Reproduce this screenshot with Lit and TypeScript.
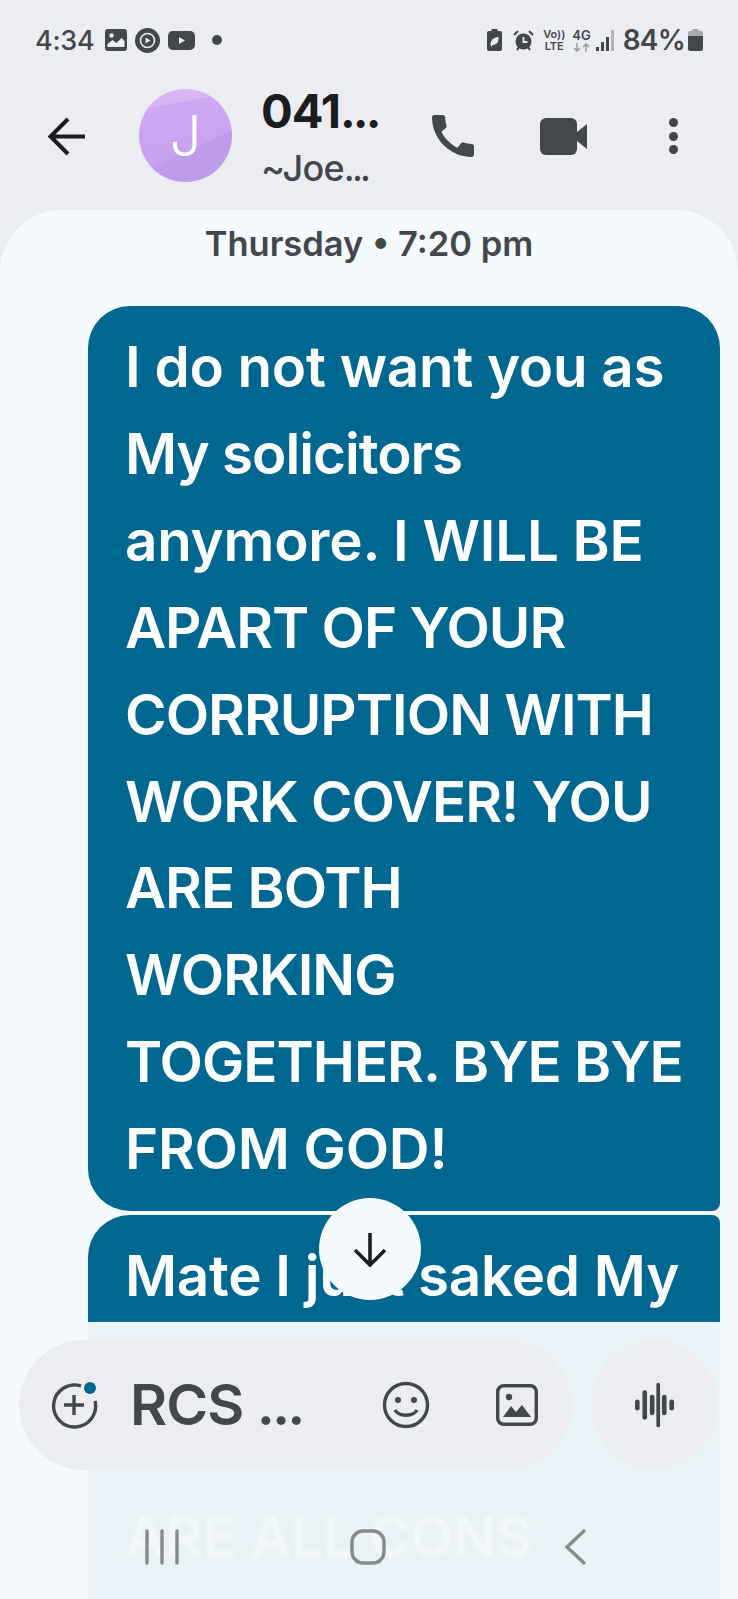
import { LitElement, html, css } from 'lit';
import { customElement } from 'lit/decorators.js';

@customElement('app-root')
export class AppRoot extends LitElement {
  static styles = css`
    :host {
      display: block;
      width: 738px;
      height: 1599px;
      overflow: hidden;
      font-family: Inter, 'Noto Sans', sans-serif;
      background: #ecedf2;
      color: #43474c;
    }
    .page {
      position: relative;
      height: 1599px;
      display: flex;
      flex-direction: column;
    }
    svg { display: block; flex: none; }

    /* status bar */
    .status {
      height: 80px;
      display: flex;
      align-items: center;
      padding: 0 35px;
      flex: none;
    }
    .time { font-size: 27px; font-weight: 500; width: 62px; letter-spacing: -0.3px; }
    .s-left { display: flex; align-items: center; gap: 8px; }
    .s-right { display: flex; align-items: center; margin-left: auto; }
    .pct { font-size: 28px; font-weight: 600; letter-spacing: -0.8px; margin: 0 3px 0 8px; }
    .tiny {
      display: flex;
      flex-direction: column;
      align-items: center;
      font-size: 11.5px;
      line-height: 12px;
      font-weight: 600;
    }
    .vo { margin-left: 9px; font-size: 11px; }
    .fourg { margin-left: 7px; font-size: 13px; line-height: 13px; gap: 1px; }
    .tiny i { font-style: normal; }

    /* header */
    .header {
      height: 130px;
      flex: none;
      display: flex;
      align-items: flex-start;
      padding-top: 9px;
      box-sizing: border-box;
    }
    .back { margin: 27px 0 0 47px; }
    .avatar {
      width: 93px;
      height: 93px;
      border-radius: 50%;
      margin-left: 51px;
      flex: none;
      display: flex;
      align-items: center;
      justify-content: center;
      color: #fff;
      font-size: 56px;
      font-weight: 300;
      background:
        linear-gradient(155deg, transparent 62%, #bd9cea 62.5%),
        linear-gradient(170deg, #dab5f4 18%, #cda8f1 19%, #c59ff0 100%);
    }
    .who { margin: -3px 0 0 29px; width: 164px; flex: none; }
    .name {
      font-size: 47px;
      line-height: 50px;
      font-weight: 700;
      color: #1b1c1f;
      letter-spacing: -1px;
    }
    .sub {
      font-size: 36px;
      line-height: 44px;
      margin-top: 10px;
      font-weight: 500;
      letter-spacing: -0.8px;
    }
    .ell { letter-spacing: -2.8px; }
    .call { margin: 19px 0 0 0; }
    .video { margin: 29px 0 0 59px; }
    .dots { margin: 27px 0 0 82px; display: flex; flex-direction: column; gap: 4.5px; padding-top: 2px; }
    .dots b { width: 9px; height: 9px; border-radius: 50%; background: #43474c; }

    /* conversation */
    .panel {
      flex: 1;
      background: #f5fafe;
      border-radius: 62px 62px 0 0;
      overflow: hidden;
    }
    .date {
      text-align: center;
      font-size: 34.5px;
      line-height: 44px;
      font-weight: 600;
      padding-top: 12px;
    }
    .msgs {
      display: flex;
      flex-direction: column;
      gap: 4px;
      margin: 40px 18px 0 88px;
    }
    .bubble {
      background: #006890;
      color: #fff;
      font-size: 56.5px;
      line-height: 86.9px;
      font-weight: 600;
      letter-spacing: -0.25px;
      padding: 18px 20px 18px 37px;
      white-space: nowrap;
    }
    .tight { letter-spacing: -1px; }
    .first { border-radius: 42px 42px 8px 42px; }
    .second {
      border-radius: 42px 8px 0 0;
      padding-top: 18px;
      padding-bottom: 120px;
      /* the part under the composer reads greener through the frosted layer */
      background: linear-gradient(#006890 107px, #00685e 107px);
    }
    .ghost { color: rgba(255, 255, 255, 0.75); }

    /* scroll button */
    .down {
      position: absolute;
      left: 319px;
      top: 1198px;
      width: 102px;
      height: 102px;
      border-radius: 50%;
      background: #f5fafe;
      box-shadow: 0 1px 3px rgba(0, 0, 0, 0.08);
      display: flex;
      align-items: center;
      justify-content: center;
    }

    /* composer + nav, lies over the list */
    .bottom {
      position: absolute;
      left: 0;
      right: 0;
      top: 1322px;
      bottom: 0;
      background: rgba(245, 250, 254, 0.95);
      backdrop-filter: blur(1.5px);
      display: flex;
      flex-direction: column;
    }
    .composer {
      display: flex;
      margin: 18px 0 0 19px;
      gap: 19px;
    }
    .pill {
      width: 553px;
      height: 130px;
      border-radius: 65px;
      background: #ecedf2;
      display: flex;
      align-items: center;
      box-sizing: border-box;
      padding-left: 31px;
    }
    .rcs {
      font-size: 57px;
      font-weight: 600;
      letter-spacing: -1px;
      margin-left: 32px;
      width: 252px;
      line-height: 60px;
    }
    .img { margin-left: 66px; }
    .mic {
      width: 127px;
      height: 130px;
      border-radius: 50%;
      background: #ecedf2;
      display: flex;
      align-items: center;
      justify-content: center;
    }
    .nav {
      display: flex;
      align-items: center;
      margin-top: 58px;
      padding-left: 144px;
    }
    .home { margin-left: 170px; }
    .chev { margin-left: 178px; }
  `;

  render() {
    return html`
      <div class="page">
        <div class="status">
          <div class="s-left">
            <span class="time">4:34</span>
            <svg width="22" height="22" viewBox="0 0 22 22">
              <rect width="22" height="22" rx="3" fill="#43474c" />
              <circle cx="6.500" cy="6.500" r="2.200" fill="#ecedf2" />
              <path d="M2.500 18v-3l5-4 4 3 5-5 3 3v6z" fill="#ecedf2" />
            </svg>
            <svg width="25" height="25" viewBox="0 0 25 25">
              <circle cx="12.500" cy="12.500" r="12.500" fill="#43474c" />
              <circle cx="12.500" cy="12.500" r="7" fill="none" stroke="#ecedf2" stroke-width="1.600" />
              <path d="M10.500 9.500l5 3-5 3z" fill="#ecedf2" />
            </svg>
            <svg width="27" height="19" viewBox="0 0 27 19">
              <rect width="27" height="19" rx="5" fill="#43474c" />
              <path d="M11 6l6 3.500-6 3.500z" fill="#ecedf2" />
            </svg>
            <svg style="margin-left:9px" width="10" height="10" viewBox="0 0 10 10">
              <circle cx="5" cy="5" r="5" fill="#43474c" />
            </svg>
          </div>
          <div class="s-right">
            <svg width="15" height="22" viewBox="0 0 15 22">
              <path d="M4.500 0h6v2H13a2 2 0 0 1 2 2v16a2 2 0 0 1-2 2H2a2 2 0 0 1-2-2V4a2 2 0 0 1 2-2h2.500z" fill="#43474c" />
              <path d="M3.500 16c0-5 3-7.500 8-8 .5 5-2 8-6 8l-1 2z" fill="#ecedf2" />
            </svg>
            <svg style="margin-left:11px" width="21" height="21" viewBox="0 0 21 21">
              <circle cx="10.500" cy="11.500" r="8" fill="#43474c" />
              <path d="M10.500 7v5h4" fill="none" stroke="#ecedf2" stroke-width="1.800" />
              <path d="M1 5l4-4M20 5l-4-4M4 20l2-3M17 20l-2-3" stroke="#43474c" stroke-width="2" />
            </svg>
            <div class="tiny vo"><i>Vo))</i><i>LTE</i></div>
            <div class="tiny fourg">
              <i>4G</i>
              <svg width="17" height="9" viewBox="0 0 17 9" fill="none" stroke="#9a9da1" stroke-width="1.500">
                <path d="M4 0v8M1 5l3 3 3-3M13 9V1M10 4l3-3 3 3" />
              </svg>
            </div>
            <svg style="margin-left:5px" width="19" height="21" viewBox="0 0 19 21">
              <rect x="0" y="17" width="3" height="4" fill="#43474c" />
              <rect x="5" y="12" width="3" height="9" fill="#43474c" />
              <rect x="10" y="7" width="3" height="14" fill="#43474c" />
              <rect x="15" y="0" width="3" height="21" fill="#b0b3b7" />
            </svg>
            <span class="pct">84%</span>
            <svg width="15" height="22" viewBox="0 0 15 22">
              <path d="M4.500 0h6v2H13a2 2 0 0 1 2 2v3H0V4a2 2 0 0 1 2-2h2.500z" fill="#a6a9ad" />
              <path d="M0 7h15v13a2 2 0 0 1-2 2H2a2 2 0 0 1-2-2z" fill="#43474c" />
            </svg>
          </div>
        </div>

        <div class="header">
          <svg class="back" width="41" height="41" viewBox="0 0 41 41" fill="none" stroke="#1b1c1f" stroke-width="4">
            <path d="M38 20.500H5M21 3L3.500 20.500 21 38" />
          </svg>
          <div class="avatar">J</div>
          <div class="who">
            <div class="name">041<span class="ell">...</span></div>
            <div class="sub">~Joe<span class="ell">...</span></div>
          </div>
          <svg class="call" width="56" height="56" viewBox="0 0 24 24" fill="#43474c">
            <path d="M20.010 15.380c-1.230 0-2.420-.2-3.530-.56a.977.977 0 0 0-1.010.24l-1.570 1.970c-2.830-1.350-5.480-3.900-6.890-6.830l1.950-1.660c.27-.28.35-.67.24-1.020-.37-1.110-.56-2.300-.56-3.530 0-.54-.45-.99-.99-.99H4.190C3.650 3 3 3.240 3 3.990 3 13.280 10.730 21 20.010 21c.71 0 .99-.63.99-1.180v-3.450c0-.54-.45-.99-.99-.99z" />
          </svg>
          <svg class="video" width="47" height="37" viewBox="0 0 47 37" fill="#43474c">
            <rect width="37" height="37" rx="6" />
            <path d="M37 14l10-8v25l-10-8z" />
          </svg>
          <div class="dots"><b></b><b></b><b></b></div>
        </div>

        <div class="panel">
          <div class="date">Thursday • 7:20 pm</div>
          <div class="msgs">
            <div class="bubble first">
              I do not want you as<br />
              <span class="tight">My solicitors</span><br />
              anymore. I WILL BE<br />
              <span class="tight">APART OF YOUR</span><br />
              <span class="tight">CORRUPTION WITH</span><br />
              <span class="tight">WORK COVER! YOU</span><br />
              <span class="tight">ARE BOTH</span><br />
              <span class="tight">WORKING</span><br />
              <span class="tight">TOGETHER. BYE BYE</span><br />
              FROM GOD!
            </div>
            <div class="bubble second">
              Mate I just saked My<br /><br /><br /><span class="ghost">ARE ALL CONS</span>
            </div>
          </div>
        </div>

        <div class="down">
          <svg width="40" height="40" viewBox="0 0 40 40" fill="none" stroke="#1b1c1f" stroke-width="3.600">
            <path d="M20 4v31M5 21l15 15 15-15" />
          </svg>
        </div>

        <div class="bottom">
          <div class="composer">
            <div class="pill">
              <svg width="48" height="48" viewBox="0 0 48 48" fill="none" stroke="#43474c" stroke-width="3.400">
                <path d="M31 5a21 21 0 1 0 14 15" />
                <path d="M24 14v20M14 24h20" />
                <circle cx="40" cy="7" r="6" fill="#006890" stroke="none" />
              </svg>
              <div class="rcs">RCS <span class="ell">...</span></div>
              <svg width="48" height="48" viewBox="0 0 48 48" fill="none" stroke="#43474c" stroke-width="3.400">
                <circle cx="24" cy="24" r="21.500" />
                <circle cx="16" cy="19" r="3" fill="#43474c" stroke="none" />
                <circle cx="32" cy="19" r="3" fill="#43474c" stroke="none" />
                <path d="M13 29c4 7 18 7 22 0" />
              </svg>
              <svg class="img" width="42" height="42" viewBox="0 0 42 42" fill="none" stroke="#43474c" stroke-width="3.400">
                <rect x="1.700" y="1.700" width="38.600" height="38.600" rx="6" />
                <circle cx="13" cy="13" r="3.200" fill="#43474c" stroke="none" />
                <path d="M7 33l8-11 5 6 6-7 9 12z" fill="#43474c" stroke="none" />
              </svg>
            </div>
            <div class="mic">
              <svg width="39" height="46" viewBox="0 0 42 48" fill="#43474c">
                <rect x="0" y="18" width="5" height="12" rx="2.500" />
                <rect x="8" y="8" width="5" height="32" rx="2.500" />
                <rect x="16" y="13" width="5" height="22" rx="2.500" />
                <rect x="23" y="0" width="4" height="48" rx="2" />
                <rect x="29" y="13" width="5" height="22" rx="2.500" />
                <rect x="37" y="18" width="5" height="12" rx="2.500" />
              </svg>
            </div>
          </div>
          <div class="nav">
            <svg width="36" height="36" viewBox="0 0 36 36" fill="none" stroke="#868a8d" stroke-width="3.400" stroke-linecap="round">
              <path d="M3 2v32M18 2v32M33 2v32" />
            </svg>
            <svg class="home" width="36" height="36" viewBox="0 0 36 36" fill="none" stroke="#868a8d" stroke-width="3.400">
              <rect x="2" y="2" width="32" height="32" rx="11" />
            </svg>
            <svg class="chev" width="24" height="38" viewBox="0 0 24 38" fill="none" stroke="#868a8d" stroke-width="3.400">
              <path d="M21 2L3 19l18 17" />
            </svg>
          </div>
        </div>
      </div>
    `;
  }
}
